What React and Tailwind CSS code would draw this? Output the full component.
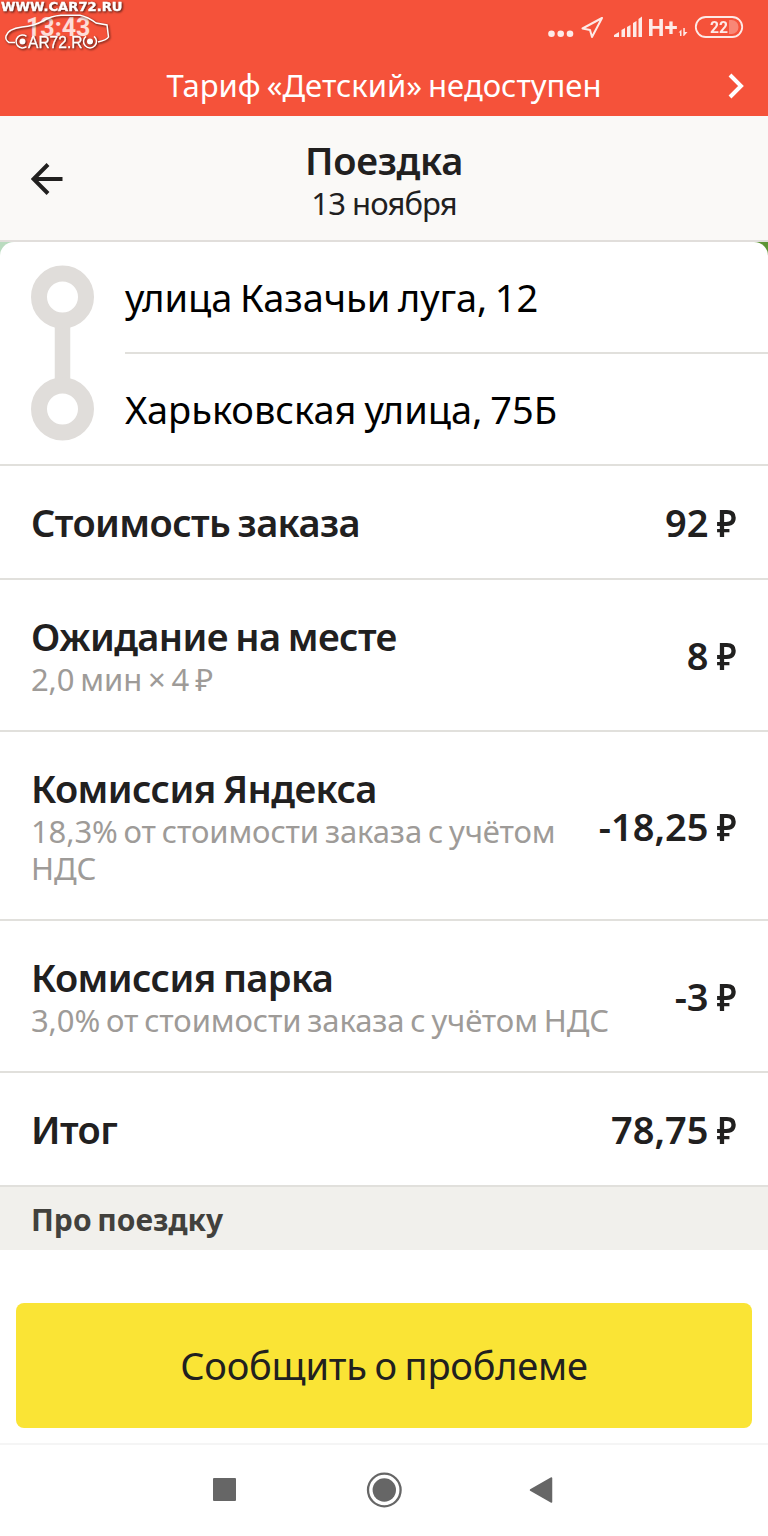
import React from 'react';

const rows = [
  { title: 'Стоимость заказа', amount: '92', box: 'h-[114px]' },
  { title: 'Ожидание на месте', note: '2,0 мин × 4 ₽', amount: '8', box: 'h-[152px]' },
  {
    title: 'Комиссия Яндекса',
    note: '18,3% от стоимости заказа с учётом НДС',
    amount: '-18,25',
    box: 'h-[189px]',
  },
  {
    title: 'Комиссия парка',
    note: '3,0% от стоимости заказа с учётом НДС',
    amount: '-3',
    box: 'h-[152px]',
  },
  { title: 'Итог', amount: '78,75', box: 'h-[114px]' },
];

const Watermark = () => (
  <svg
    className="absolute left-0 top-0 drop-shadow-[1px_1px_1px_rgba(0,0,0,0.7)]"
    width="130"
    height="56"
    viewBox="0 0 130 56"
  >
    <text
      x="1"
      y="11.4"
      fill="#fff"
      stroke="#fff"
      strokeWidth="0.4"
      fontFamily="'DejaVu Sans', sans-serif"
      fontWeight="700"
      fontSize="13"
      textLength="121.5"
      lengthAdjust="spacingAndGlyphs"
    >
      WWW.CAR72.RU
    </text>
    <path
      d="M15 42.5H9Q5 40 6 36Q8 29 22 27Q34 26 43 21Q51 16 61 15.3H80Q88 17 96 23L107 25L108.5 37Q107 40 98 42"
      fill="none"
      stroke="#fff"
      strokeWidth="1.5"
    />
    <circle cx="22.5" cy="41.5" r="3" fill="#fff" />
    <circle cx="90" cy="41.5" r="3" fill="#fff" />
    <path d="M26.5 36.3A6.5 6.5 0 1 0 26.5 46.7M86 36.3A6.5 6.5 0 1 0 94 36.3" fill="none" stroke="#fff" strokeWidth="1.5" />
    <text
      x="28"
      y="47.5"
      fill="#fff"
      stroke="#fff"
      strokeWidth="0.3"
      fontFamily="'Liberation Sans', sans-serif"
      fontSize="16"
      textLength="54.5"
      lengthAdjust="spacingAndGlyphs"
    >
      AR72.R
    </text>
  </svg>
);

const StatusIcons = () => (
  <svg className="absolute left-[540px] top-0" width="220" height="56" viewBox="540 0 220 56" fill="#fff" opacity="0.88">
    <circle cx="551.5" cy="33.7" r="3.3" />
    <circle cx="560.7" cy="33.7" r="3.3" />
    <circle cx="570" cy="33.7" r="3.3" />
    <path d="M602 18L582.5 28.5L590 30L592 37Z" fill="none" stroke="#fff" strokeWidth="2" strokeLinejoin="round" />
    <path d="M614 37V35L619 32V37ZM621.5 37V30L625 28V37ZM627 37V27L630.5 25V37ZM633 37V23L636.5 21V37ZM638.5 37V19L642 16.5V37Z" />
    <text x="647.5" y="35.5" fontFamily="Roboto, sans-serif" fontWeight="700" fontSize="23" textLength="30" lengthAdjust="spacingAndGlyphs">
      H+
    </text>
    <path d="M678.5 32.5L681.5 29.5V36H680V32.5ZM683.3 28H684.8V32L687.5 32L684 36H683.3Z" />
    <rect x="695.8" y="17" width="46.4" height="20" rx="10" fill="none" stroke="#fff" strokeWidth="1.8" />
    <path d="M729 20H731.5A7 7 0 0 1 731.5 34H729Z" opacity="0.35" />
    <text x="710" y="33.2" fontFamily="Roboto, sans-serif" fontWeight="700" fontSize="17" textLength="18" lengthAdjust="spacingAndGlyphs">
      22
    </text>
  </svg>
);

const TripRoute = () => (
  <section className="flex h-[222px] bg-[linear-gradient(90deg,#badbbf_50%,#5d9434_50%)]">
    <div className="flex w-full rounded-t-[14px] bg-white">
      <svg className="ml-[31px] mt-[23px] shrink-0" width="63" height="176" viewBox="0 0 63 176">
        <path d="M31.5 50V126" stroke="#e0ddda" strokeWidth="15.5" />
        <circle cx="31.5" cy="32" r="23.5" fill="#fff" stroke="#e0ddda" strokeWidth="16" />
        <circle cx="31.5" cy="144" r="23.5" fill="#fff" stroke="#e0ddda" strokeWidth="16" />
      </svg>
      <div className="ml-[31px] flex-1 text-[38px] text-black [word-spacing:-2px]">
        <div className="flex h-[112px] items-center border-b-2 border-[#e1e0dc] pt-px">
          <span className="tracking-[-0.1px]">улица Казачьи луга, 12</span>
        </div>
        <div className="flex h-[110px] items-center">
          <span>Харьковская улица, 75Б</span>
        </div>
      </div>
    </div>
  </section>
);

const Row = ({ row }) => (
  <div className={`flex items-center justify-between border-b-2 border-[#e1e0dc] pl-[31px] pr-[31px] ${row.box}`}>
    <div className={row.amount.length > 5 ? 'max-w-[540px]' : 'whitespace-nowrap'}>
      <div className="text-[38px] font-semibold leading-[47px] tracking-[-0.6px] [word-spacing:-2px]">{row.title}</div>
      {row.note && (
        <div className="pt-px text-[31px] leading-[37px] tracking-[-0.12px] text-[#9e9b98] [word-spacing:-2px]">
          {row.note}
        </div>
      )}
    </div>
    <div className="whitespace-nowrap text-[38px] font-semibold leading-[48px] [word-spacing:-4px]">
      {row.amount} <span className="inline-block origin-right scale-x-[0.88]">₽</span>
    </div>
  </div>
);

const App = () => (
  <div className="relative flex h-[1536px] w-[768px] flex-col overflow-hidden bg-white font-['Noto_Sans',sans-serif] text-[#21201f]">
    <header className="h-[116px] bg-[#f5523a] text-white">
      <div className="relative h-14">
        <span className="absolute left-[26px] top-[12px] font-['Roboto',sans-serif] text-[25px] font-bold leading-8 text-white/80">
          13:43
        </span>
        <Watermark />
        <StatusIcons />
      </div>
      <div className="flex h-[60px] items-center pl-10 pr-6">
        <div className="flex-1 pb-0.5 text-center text-[31px] [word-spacing:-2px]">Тариф «Детский» недоступен</div>
        <svg width="16" height="26" viewBox="0 0 16 26" fill="none" stroke="#fff" strokeWidth="4">
          <path d="M2 2L13 13L2 24" />
        </svg>
      </div>
    </header>

    <div className="flex h-[126px] items-center border-b-2 border-[#e1dedb] bg-[#faf9f7] px-[31px] pt-0.5">
      <svg width="32" height="32" viewBox="0 0 32 32" fill="none" stroke="#21201f" strokeWidth="4">
        <path d="M31.5 16H3M17 1.5L2.5 16L17 30.5" />
      </svg>
      <div className="mr-8 flex-1 pt-1 text-center">
        <div className="text-[38px] font-semibold leading-[44px] tracking-[-0.3px]">Поездка</div>
        <div className="text-[31px] leading-[42px] tracking-[-0.9px]">13 ноября</div>
      </div>
    </div>

    <TripRoute />
    <div className="h-0.5 bg-[#e1e0dc]" />

    {rows.map((row) => (
      <Row key={row.title} row={row} />
    ))}

    <div className="flex h-[63px] items-center bg-[#f1f0ec] pl-[31px] pt-0.5 text-[30px] font-bold text-[#42413d] [word-spacing:-2px]">
      Про поездку
    </div>

    <div className="mt-auto px-4 pb-[15px]">
      <button className="h-[125px] w-full rounded-lg bg-[#fae435] text-[38px] tracking-[-0.2px] [word-spacing:-2px]">
        Сообщить о проблеме
      </button>
    </div>

    <nav className="h-[93px] border-t-2 border-[#f5f5f5]">
      <svg width="768" height="91" viewBox="0 1445 768 91" fill="#666">
        <rect x="213" y="1478" width="23" height="23" rx="1" />
        <circle cx="384.3" cy="1490" r="16.3" fill="none" stroke="#666" strokeWidth="2.3" />
        <circle cx="384.3" cy="1490" r="11.7" />
        <path d="M530.5 1490L551.5 1478V1502Z" stroke="#666" strokeWidth="1.5" strokeLinejoin="round" />
      </svg>
    </nav>
  </div>
);

export default App;
